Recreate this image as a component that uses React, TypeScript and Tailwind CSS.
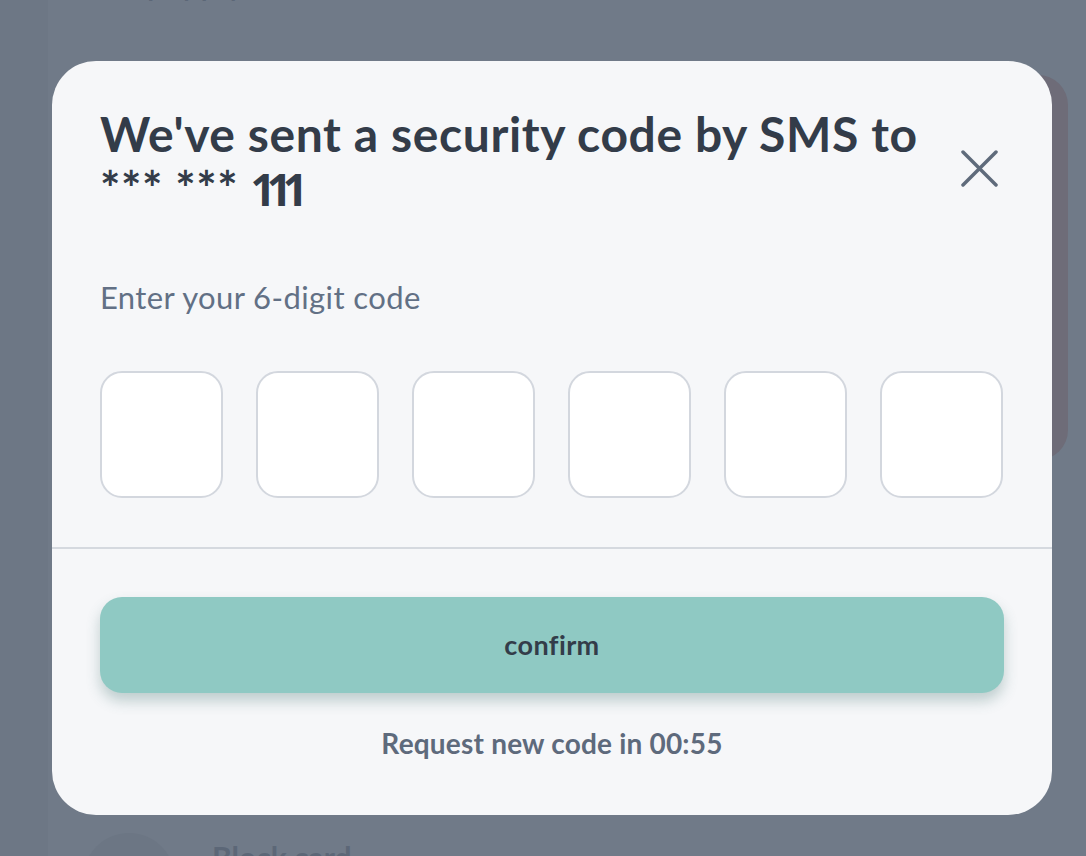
const otpSlots = [0, 1, 2, 3, 4, 5];

function CloseIcon() {
  return (
    <svg width="37" height="37" viewBox="0 0 37 37" fill="none">
      <path
        d="M2 2L35 35M35 2L2 35"
        stroke="#5f6b7b"
        strokeWidth="3.5"
        strokeLinecap="round"
      />
    </svg>
  );
}

function BackgroundPage() {
  return (
    <div className="h-[856px] overflow-hidden bg-[#6d7785] pl-[48px]">
      <div className="flex h-full flex-col bg-[#707a88]">
        {/* top text, mostly scrolled away */}
        <p className="-mt-[27px] ml-[62px] text-[26px] leading-[28px] font-bold text-[#5c6777]">
          Display payments
        </p>

        {/* card partly hidden by modal */}
        <div className="mt-[74px] flex justify-end pr-[18px]">
          <div className="h-[385px] w-[300px] rounded-[30px] bg-[#6e6c78]" />
        </div>

        {/* bottom row */}
        <div className="mt-[373px] flex items-start">
          <div className="ml-[35px] h-[92px] w-[92px] shrink-0 rounded-full bg-[#6c7684]" />
          <p className="ml-[37px] mt-[6px] text-[30px] leading-[36px] font-bold text-[#5c6777]">
            Block card
          </p>
        </div>
      </div>
    </div>
  );
}

export default function App() {
  return (
    <div
      className="relative h-[856px] w-[1086px] overflow-hidden"
      style={{ fontFamily: "Lato, 'Open Sans', sans-serif" }}
    >
      <BackgroundPage />

      {/* modal */}
      <div className="absolute left-[52px] top-[61px] flex h-[754px] w-[1000px] flex-col rounded-[44px] bg-[#f6f7f9]">
        <div className="px-[48px] pt-[46px]">
          <div className="flex items-start justify-between">
            <h1 className="text-[48px] leading-[54px] font-bold tracking-[0.6px] text-[#333c49]">
              We've sent a security code by SMS to
              <br />
              *** ***{" "}
              <span className="font-['Open_Sans',sans-serif] text-[44px] leading-none tracking-[-9px]">
                111
              </span>
            </h1>
            <div className="mr-[6px] mt-[43px]">
              <CloseIcon />
            </div>
          </div>

          <p className="mt-[64px] text-[31px] leading-[36px] tracking-[0.4px] text-[#627085]">
            Enter your 6-digit code
          </p>

          <div className="mt-[56px] flex gap-[33px]">
            {otpSlots.map((i) => (
              <div
                key={i}
                className="h-[127px] w-[123px] rounded-[22px] border-2 border-[#d3d7de] bg-white"
              />
            ))}
          </div>
        </div>

        <div className="mt-[49px] h-[2px] w-full bg-[#d5d9df]" />

        <div className="px-[48px] pt-[48px]">
          <button className="flex h-[96px] w-full items-center justify-center rounded-[22px] bg-[#8fc9c3] text-[27px] font-bold tracking-[0.4px] text-[#333c49] shadow-[0_8px_14px_rgba(60,110,105,0.3)]">
            confirm
          </button>
          <p className="mt-[32px] text-center text-[28px] leading-[36px] font-bold tracking-[0.2px] text-[#5e6a7c]">
            Request new code in 00:55
          </p>
        </div>
      </div>
    </div>
  );
}
